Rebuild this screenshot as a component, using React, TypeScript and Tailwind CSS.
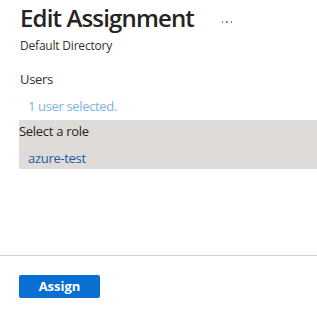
import React from "react";

export default function App() {
  return (
    <div
      className="w-[317px] h-[310px] bg-white flex flex-col overflow-hidden"
      style={{ fontFamily: '"Open Sans", "Noto Sans", sans-serif' }}
    >
      <div className="pl-[20px] pt-[2px] flex items-start">
        <div>
          <div className="text-[24px] leading-[32px] font-semibold text-[#252423] tracking-[-0.85px]">
            Edit Assignment
          </div>
          <div className="text-[12px] leading-[16px] text-[#323130] mt-[4px] tracking-[-0.2px]">
            Default Directory
          </div>
        </div>
        <div className="ml-[28px] mt-[19px] flex gap-[3px]">
          <span className="w-[1.5px] h-[1.5px] bg-[#8a8886]" />
          <span className="w-[1.5px] h-[1.5px] bg-[#8a8886]" />
          <span className="w-[1.5px] h-[1.5px] bg-[#8a8886]" />
        </div>
      </div>

      <div className="pl-[20px] mt-[16px] text-[13px] leading-[18px] text-[#323130] tracking-[-0.3px]">Users</div>
      <div className="pl-[28px] mt-[9px] text-[13px] leading-[18px] text-[#7ab4e6] tracking-[-0.35px]">
        1 user selected.
      </div>
      <div className="ml-[19px] mt-[5px] h-[49px] bg-[#dfdbd8] pt-[2px] tracking-[-0.3px]">
        <div className="text-[13px] leading-[18px] text-[#252423]">Select a role</div>
        <div className="pl-[9px] mt-[9px] text-[13px] leading-[18px] text-[#1a5ca8]">azure-test</div>
      </div>

      <div className="flex-1" />
      <div className="border-t border-[#d2d0ce]" />
      <div className="pl-[19px] pt-[17px] pb-[12px]">
        <button className="w-[81px] h-[23px] rounded-[2px] bg-[#0a6fd2] text-white text-[13px] font-bold leading-[23px]">
          Assign
        </button>
      </div>
    </div>
  );
}
